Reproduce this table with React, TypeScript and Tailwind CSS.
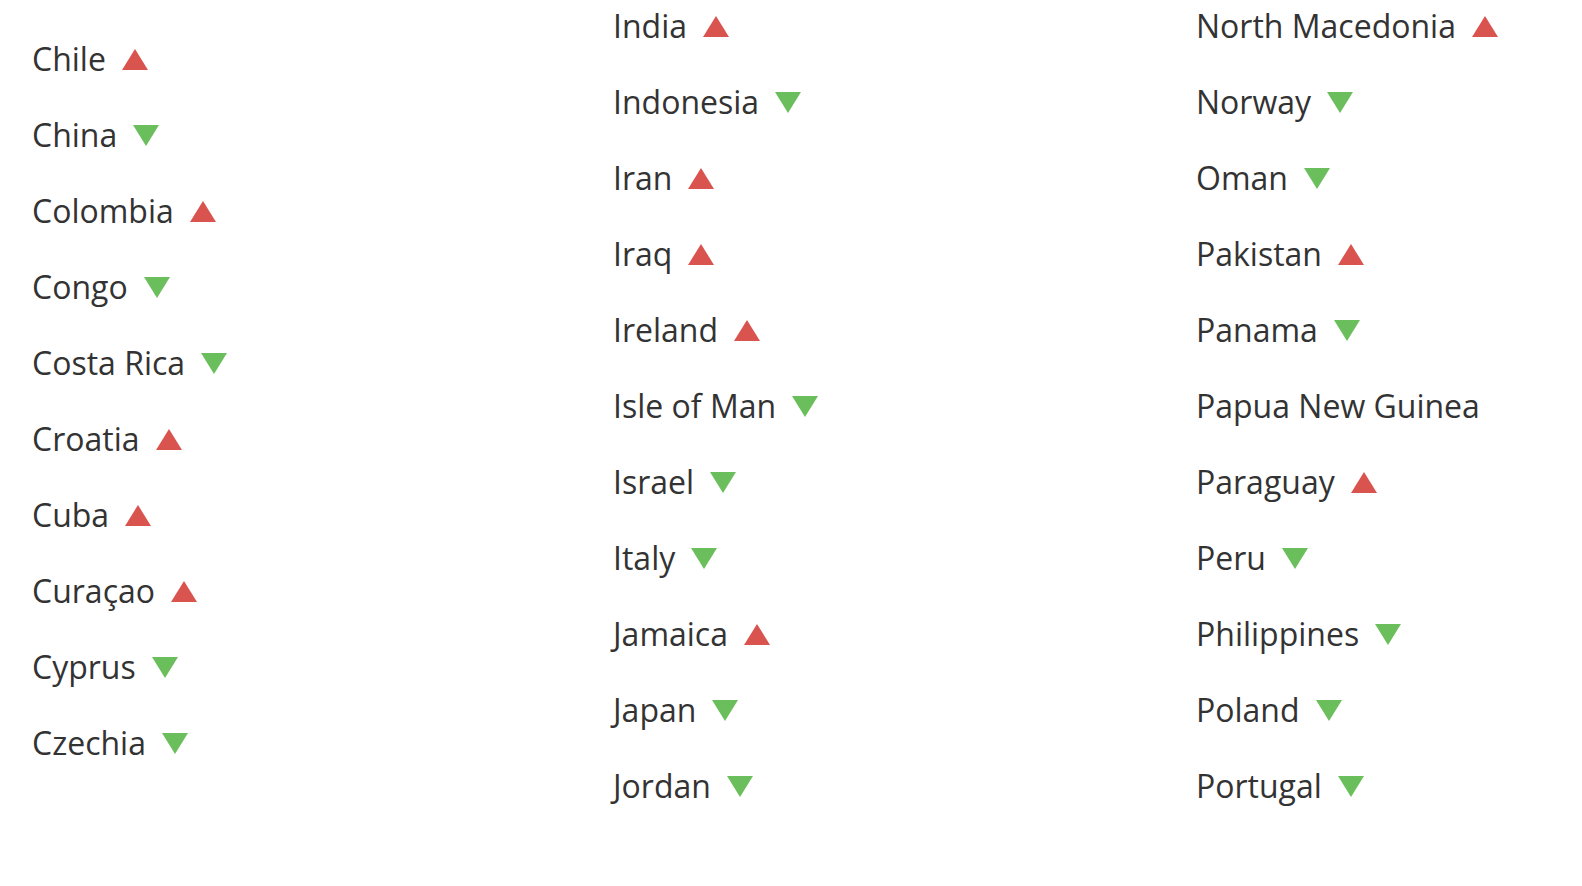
type Trend = 'up' | 'down' | null;

interface Country {
  name: string;
  trend: Trend;
}

const columns: { offset: string; items: Country[] }[] = [
  {
    offset: 'pt-[37px]',
    items: [
      { name: 'Chile', trend: 'up' },
      { name: 'China', trend: 'down' },
      { name: 'Colombia', trend: 'up' },
      { name: 'Congo', trend: 'down' },
      { name: 'Costa Rica', trend: 'down' },
      { name: 'Croatia', trend: 'up' },
      { name: 'Cuba', trend: 'up' },
      { name: 'Curaçao', trend: 'up' },
      { name: 'Cyprus', trend: 'down' },
      { name: 'Czechia', trend: 'down' },
    ],
  },
  {
    offset: 'pt-[4px]',
    items: [
      { name: 'India', trend: 'up' },
      { name: 'Indonesia', trend: 'down' },
      { name: 'Iran', trend: 'up' },
      { name: 'Iraq', trend: 'up' },
      { name: 'Ireland', trend: 'up' },
      { name: 'Isle of Man', trend: 'down' },
      { name: 'Israel', trend: 'down' },
      { name: 'Italy', trend: 'down' },
      { name: 'Jamaica', trend: 'up' },
      { name: 'Japan', trend: 'down' },
      { name: 'Jordan', trend: 'down' },
    ],
  },
  {
    offset: 'pt-[4px]',
    items: [
      { name: 'North Macedonia', trend: 'up' },
      { name: 'Norway', trend: 'down' },
      { name: 'Oman', trend: 'down' },
      { name: 'Pakistan', trend: 'up' },
      { name: 'Panama', trend: 'down' },
      { name: 'Papua New Guinea', trend: null },
      { name: 'Paraguay', trend: 'up' },
      { name: 'Peru', trend: 'down' },
      { name: 'Philippines', trend: 'down' },
      { name: 'Poland', trend: 'down' },
      { name: 'Portugal', trend: 'down' },
    ],
  },
];

function TrendIcon({ trend }: { trend: Trend }) {
  if (!trend) return null;
  return (
    <svg width="26" height="21" viewBox="0 0 26 21" className="ml-4 shrink-0">
      {trend === 'up' ? (
        <polygon points="13,0 26,21 0,21" fill="#d9534f" />
      ) : (
        <polygon points="0,0 26,0 13,21" fill="#6abf5c" />
      )}
    </svg>
  );
}

export default function App() {
  return (
    <div
      className="min-h-[886px] w-full bg-white text-[#333333]"
      style={{ fontFamily: '"Open Sans", "Noto Sans", sans-serif' }}
    >
      <div className="grid grid-cols-[581px_583px_1fr] pl-[32px]">
        {columns.map((col, i) => (
          <ul key={i} className={`flex flex-col gap-[32px] ${col.offset}`}>
            {col.items.map((c) => (
              <li key={c.name} className="flex h-[44px] items-center text-[32px] leading-[44px]">
                <span>{c.name}</span>
                <TrendIcon trend={c.trend} />
              </li>
            ))}
          </ul>
        ))}
      </div>
    </div>
  );
}
